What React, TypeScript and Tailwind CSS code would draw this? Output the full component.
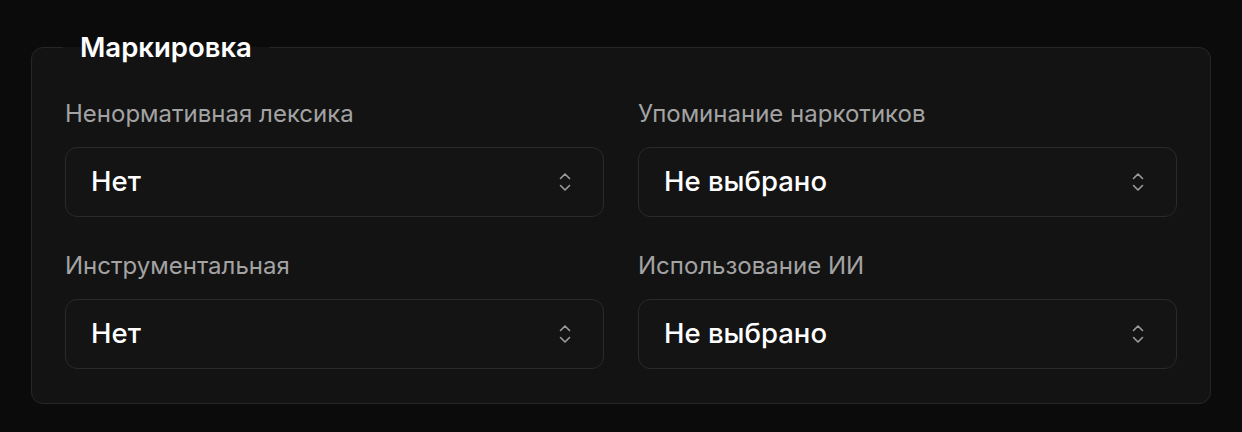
import React from "react";

const fields = [
  { label: "Ненормативная лексика", value: "Нет" },
  { label: "Упоминание наркотиков", value: "Не выбрано" },
  { label: "Инструментальная", value: "Нет" },
  { label: "Использование ИИ", value: "Не выбрано" },
];

function UpDown() {
  return (
    <svg width="12" height="20" viewBox="0 0 12 20" fill="none" className="shrink-0">
      <path d="M1.5 6.5 6 2l4.5 4.5" stroke="#9c9c9c" strokeWidth="1.6" strokeLinecap="round" strokeLinejoin="round" />
      <path d="M1.5 13.5 6 18l4.5-4.5" stroke="#9c9c9c" strokeWidth="1.6" strokeLinecap="round" strokeLinejoin="round" />
    </svg>
  );
}

export default function App() {
  return (
    <div className="min-h-[432px] w-full bg-[#0b0b0b] px-[31px] pt-[31px] font-['Inter','Liberation_Sans',sans-serif]">
      <fieldset className="rounded-[12px] border border-[#262626] bg-[#131313] pl-[33px] pr-[33px] pb-[34px] pt-[37px]">
        <legend className="-ml-0.5 px-[17px] text-[27.5px] leading-[32px] font-semibold text-white">
          Маркировка
        </legend>
        <div className="grid grid-cols-2 gap-x-[34px] gap-y-[35px]">
          {fields.map((f) => (
            <div key={f.label} className="flex flex-col gap-[19px]">
              <span className="text-[24px] leading-[28px] text-[#a3a3a3]">{f.label}</span>
              <button className="flex h-[70px] items-center justify-between rounded-[12px] border border-[#2a2a2a] bg-[#141414] pl-[25px] pr-[32px] text-left">
                <span className="text-[27.5px] font-medium text-white">{f.value}</span>
                <UpDown />
              </button>
            </div>
          ))}
        </div>
      </fieldset>
    </div>
  );
}
